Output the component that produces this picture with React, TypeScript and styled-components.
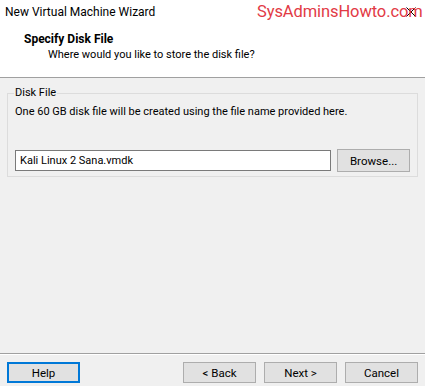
import styled, { createGlobalStyle } from "styled-components";

const GlobalStyle = createGlobalStyle`
  html, body {
    margin: 0;
    padding: 0;
    background: #f0f0f0;
  }
  * {
    box-sizing: border-box;
  }
`;

const Window = styled.div`
  width: 425px;
  height: 386px;
  display: flex;
  flex-direction: column;
  background: #f0f0f0;
  font-family: Roboto, "Noto Sans", sans-serif;
  font-size: 11px;
  color: #000;
  overflow: hidden;
`;

const Header = styled.div`
  background: #ffffff;
  height: 78px;
  border-bottom: 1px solid #a0a0a0;
  display: flex;
  flex-direction: column;
`;

const TitleBar = styled.div`
  display: flex;
  align-items: center;
  height: 24px;
  padding-left: 5px;
  position: relative;
`;

const Title = styled.span`
  flex: 1;
  font-size: 12px;
  line-height: 16px;
`;

const Watermark = styled.span`
  position: absolute;
  left: 257px;
  top: 0px;
  font-size: 16.5px;
  letter-spacing: -0.1px;
  line-height: 24px;
  color: #e23a45;
  z-index: 2;
`;

const CloseIcon = styled.svg`
  position: absolute;
  right: 9px;
  top: 7px;
  z-index: 1;
`;

const Heading = styled.div`
  padding: 7px 0 0 24px;
  font-size: 12px;
  font-weight: bold;
  line-height: 16px;
`;

const SubHeading = styled.div`
  padding-left: 48px;
  line-height: 16px;
`;

const Content = styled.div`
  flex: 1;
  padding: 7px 7px 0 7px;
`;

const Group = styled.fieldset`
  margin: 0;
  padding: 2px 7px 4px 7px;
  border: 1px solid #dcdcdc;
  min-width: 0;
`;

const Legend = styled.legend`
  padding: 0 1px;
  margin-left: -1px;
  line-height: 16px;
`;

const Description = styled.p`
  margin: 0 0 28px 0;
  line-height: 18px;
`;

const FileRow = styled.div`
  display: flex;
  align-items: center;
  gap: 6px;
`;

const FileInput = styled.input`
  width: 317px;
  height: 21px;
  border: 1px solid #7a7a7a;
  background: #fff;
  padding: 0 4px;
  font-family: inherit;
  font-size: 11px;
  color: #000;
  outline: none;
`;

const Button = styled.button<{ $focused?: boolean }>`
  width: 73px;
  height: 21px;
  background: #e1e1e1;
  border: ${(p) => (p.$focused ? "2px solid #0078d7" : "1px solid #adadad")};
  font-family: inherit;
  font-size: 11.5px;
  color: #000;
  padding: 0;
  line-height: 16px;
`;

const BrowseButton = styled(Button)`
  height: 23px;
`;

const Footer = styled.div`
  border-top: 1px solid #a0a0a0;
  box-shadow: inset 0 1px 0 #ffffff;
  height: 33px;
  display: flex;
  align-items: flex-start;
  padding: 8px 7px 0 7px;
`;

const Spacer = styled.div`
  flex: 1;
`;

const NavGroup = styled.div`
  display: flex;
  gap: 8px;
`;

export default function App() {
  return (
    <>
      <GlobalStyle />
      <Window>
        <Header>
          <TitleBar>
            <Title>New Virtual Machine Wizard</Title>
            <CloseIcon width="10" height="10" viewBox="0 0 10 10">
              <path d="M0.5 0.5 L9.5 9.5 M9.5 0.5 L0.5 9.5" stroke="#000" strokeWidth="1" />
            </CloseIcon>
            <Watermark>SysAdminsHowto.com</Watermark>
          </TitleBar>
          <Heading>Specify Disk File</Heading>
          <SubHeading>Where would you like to store the disk file?</SubHeading>
        </Header>
        <Content>
          <Group>
            <Legend>Disk File</Legend>
            <Description>
              One 60 GB disk file will be created using the file name provided here.
            </Description>
            <FileRow>
              <FileInput defaultValue="Kali Linux 2 Sana.vmdk" />
              <BrowseButton>Browse...</BrowseButton>
            </FileRow>
          </Group>
        </Content>
        <Footer>
          <Button $focused>Help</Button>
          <Spacer />
          <NavGroup>
            <Button>&lt; Back</Button>
            <Button>Next &gt;</Button>
            <Button>Cancel</Button>
          </NavGroup>
        </Footer>
      </Window>
    </>
  );
}
